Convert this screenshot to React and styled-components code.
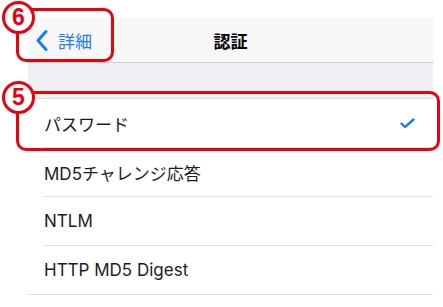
import React from "react";
import styled, { createGlobalStyle } from "styled-components";

const GlobalStyle = createGlobalStyle`
  html, body {
    margin: 0;
    padding: 0;
    background: #ffffff;
    overflow: hidden;
  }
  body {
    font-family: Inter, "Noto Sans CJK JP", "Noto Sans", sans-serif;
    -webkit-font-smoothing: antialiased;
  }
`;

const options = [
  { label: "パスワード", selected: true },
  { label: "MD5チャレンジ応答" },
  { label: "NTLM" },
  { label: "HTTP MD5 Digest" },
];

export default function App() {
  return (
    <Page>
      <GlobalStyle />
      <Screen>
        <NavBar>
          <BackButton>
            <svg width="12" height="21" viewBox="0 0 12 21">
              <polyline
                points="10,1.5 2,10.5 10,19.5"
                fill="none"
                stroke="#1a7df6"
                strokeWidth="3"
                strokeLinecap="round"
                strokeLinejoin="round"
              />
            </svg>
            詳細
          </BackButton>
          <Title>認証</Title>
          <span />
        </NavBar>
        <SectionGap />
        <List>
          {options.map((o, i) => (
            <Row key={o.label} $last={i === options.length - 1}>
              <RowLabel>{o.label}</RowLabel>
              {o.selected && (
                <svg width="15" height="11" viewBox="0 0 15 11">
                  <polyline
                    points="1.5,5.5 5,9 13.5,1.5"
                    fill="none"
                    stroke="#1a7df6"
                    strokeWidth="2.4"
                    strokeLinecap="round"
                    strokeLinejoin="round"
                  />
                </svg>
              )}
            </Row>
          ))}
        </List>
      </Screen>

      <Highlight $top={8} $left={16} $width={98} $height={54} />
      <Badge $top={1}>6</Badge>

      <Highlight $top={91} $left={16} $width={424} $height={60} />
      <Badge $top={81}>5</Badge>
    </Page>
  );
}

const Page = styled.div`
  position: relative;
  width: 443px;
  height: 307px;
  box-sizing: border-box;
  padding: 18px 10px 0 28px;
`;

const Screen = styled.div`
  display: flex;
  flex-direction: column;
  width: 405px;
`;

const NavBar = styled.div`
  display: grid;
  grid-template-columns: 1fr auto 1fr;
  align-items: center;
  height: 44px;
  background-color: #f7f7f8;
  border-bottom: 1px solid #cfcfd3;
`;

const BackButton = styled.div`
  display: flex;
  align-items: center;
  gap: 10px;
  padding-left: 8px;
  color: #1a7df6;
  font-size: 17px;
`;

const Title = styled.div`
  font-size: 17px;
  font-weight: 700;
  color: #000;
`;

const SectionGap = styled.div`
  height: 35px;
  background-color: #efeff4;
  border-bottom: 1px solid #dcdce0;
`;

const List = styled.div`
  display: flex;
  flex-direction: column;
  background: #fff;
`;

const Row = styled.div`
  display: flex;
  align-items: center;
  justify-content: space-between;
  height: 48px;
  margin-bottom: 1px;
  padding: 0 18px 0 16px;
  position: relative;
  &::after {
    content: "";
    position: absolute;
    bottom: -1px;
    left: ${(p) => (p.$last ? "0" : "16px")};
    right: 0;
    height: 1px;
    background: #e0e0e3;
  }
`;

const RowLabel = styled.span`
  font-size: 17px;
  color: #1c1c1e;
`;

const Highlight = styled.div`
  position: absolute;
  top: ${(p) => p.$top}px;
  left: ${(p) => p.$left}px;
  width: ${(p) => p.$width}px;
  height: ${(p) => p.$height}px;
  box-sizing: border-box;
  border: 3.5px solid #ea0010;
  border-radius: 10px;
`;

const Badge = styled.div`
  position: absolute;
  top: ${(p) => p.$top}px;
  left: 2px;
  width: 33px;
  height: 33px;
  box-sizing: border-box;
  border: 3px solid #ea0010;
  border-radius: 50%;
  background: #fff;
  display: flex;
  align-items: center;
  justify-content: center;
  color: #ea0010;
  font-family: "Liberation Sans", Arial, sans-serif;
  font-weight: 700;
  font-size: 23px;
  line-height: 1;
`;
